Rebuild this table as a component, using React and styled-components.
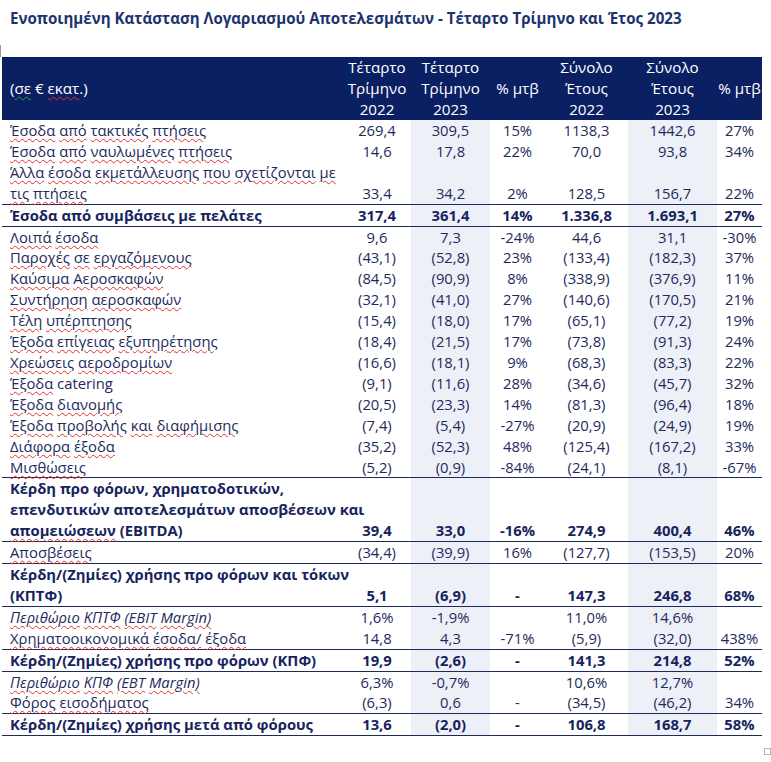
import React from "react";
import styled, { createGlobalStyle } from "styled-components";

const NAVY = "#0b1f63";
const INK = "#1d2a5c";
const SHADE = "#edf0f7";

const GlobalStyle = createGlobalStyle`
  html, body {
    margin: 0;
    padding: 0;
    background: #ffffff;
  }
  body {
    font-family: "Open Sans", "Noto Sans", sans-serif;
    color: ${INK};
  }
`;

// widths of the seven columns, left to right
const COLS = [341, 68, 79, 55, 83, 89, 45];
const SHADED = [false, false, true, false, false, true, false];

const rows = [
  { label: ["Έσοδα από τακτικές πτήσεις"], v: ["269,4", "309,5", "15%", "1138,3", "1442,6", "27%"] },
  { label: ["Έσοδα από ναυλωμένες πτήσεις"], v: ["14,6", "17,8", "22%", "70,0", "93,8", "34%"] },
  {
    label: ["Άλλα έσοδα εκμετάλλευσης που σχετίζονται με", "τις πτήσεις"],
    v: ["33,4", "34,2", "2%", "128,5", "156,7", "22%"],
    line: true,
  },
  {
    label: ["Έσοδα από συμβάσεις με πελάτες"],
    v: ["317,4", "361,4", "14%", "1.336,8", "1.693,1", "27%"],
    bold: true,
    line: true,
  },
  { label: ["Λοιπά έσοδα"], v: ["9,6", "7,3", "-24%", "44,6", "31,1", "-30%"] },
  { label: ["Παροχές σε εργαζόμενους"], v: ["(43,1)", "(52,8)", "23%", "(133,4)", "(182,3)", "37%"] },
  { label: ["Καύσιμα Αεροσκαφών"], v: ["(84,5)", "(90,9)", "8%", "(338,9)", "(376,9)", "11%"] },
  { label: ["Συντήρηση αεροσκαφών"], v: ["(32,1)", "(41,0)", "27%", "(140,6)", "(170,5)", "21%"] },
  { label: ["Τέλη υπέρπτησης"], v: ["(15,4)", "(18,0)", "17%", "(65,1)", "(77,2)", "19%"] },
  { label: ["Έξοδα επίγειας εξυπηρέτησης"], v: ["(18,4)", "(21,5)", "17%", "(73,8)", "(91,3)", "24%"] },
  { label: ["Χρεώσεις αεροδρομίων"], v: ["(16,6)", "(18,1)", "9%", "(68,3)", "(83,3)", "22%"] },
  { label: ["Έξοδα catering"], v: ["(9,1)", "(11,6)", "28%", "(34,6)", "(45,7)", "32%"] },
  { label: ["Έξοδα διανομής"], v: ["(20,5)", "(23,3)", "14%", "(81,3)", "(96,4)", "18%"] },
  { label: ["Έξοδα προβολής και διαφήμισης"], v: ["(7,4)", "(5,4)", "-27%", "(20,9)", "(24,9)", "19%"] },
  { label: ["Διάφορα έξοδα"], v: ["(35,2)", "(52,3)", "48%", "(125,4)", "(167,2)", "33%"] },
  { label: ["Μισθώσεις"], v: ["(5,2)", "(0,9)", "-84%", "(24,1)", "(8,1)", "-67%"], line: true },
  {
    label: [
      "Κέρδη προ φόρων, χρηματοδοτικών,",
      "επενδυτικών αποτελεσμάτων αποσβέσεων και",
      "απομειώσεων (EBITDA)",
    ],
    v: ["39,4", "33,0", "-16%", "274,9", "400,4", "46%"],
    bold: true,
    line: true,
  },
  { label: ["Αποσβέσεις"], v: ["(34,4)", "(39,9)", "16%", "(127,7)", "(153,5)", "20%"], line: true },
  {
    label: ["Κέρδη/(Ζημίες) χρήσης προ φόρων και τόκων", "(ΚΠΤΦ)"],
    v: ["5,1", "(6,9)", "-", "147,3", "246,8", "68%"],
    bold: true,
    line: true,
  },
  { label: ["Περιθώριο ΚΠΤΦ (EBIT Margin)"], v: ["1,6%", "-1,9%", "", "11,0%", "14,6%", ""], italic: true },
  {
    label: ["Χρηματοοικονομικά έσοδα/ έξοδα"],
    v: ["14,8", "4,3", "-71%", "(5,9)", "(32,0)", "438%"],
    line: true,
  },
  {
    label: ["Κέρδη/(Ζημίες) χρήσης προ φόρων (ΚΠΦ)"],
    v: ["19,9", "(2,6)", "-", "141,3", "214,8", "52%"],
    bold: true,
    line: true,
  },
  { label: ["Περιθώριο ΚΠΦ (EBT Margin)"], v: ["6,3%", "-0,7%", "", "10,6%", "12,7%", ""], italic: true },
  { label: ["Φόρος εισοδήματος"], v: ["(6,3)", "0,6", "-", "(34,5)", "(46,2)", "34%"], line: true },
  {
    label: ["Κέρδη/(Ζημίες) χρήσης μετά από φόρους"],
    v: ["13,6", "(2,0)", "-", "106,8", "168,7", "58%"],
    bold: true,
    line: true,
  },
];

// words the spell checker leaves alone
const CLEAN = new Set(["catering", "(EBITDA)"]);

const Squiggly = ({ text, bold }) => {
  const words = text.split(" ");
  return words.map((w, i) => {
    const marked = bold ? w === "απομειώσεων" : !CLEAN.has(w);
    return (
      <React.Fragment key={i}>
        {marked ? <Wavy>{w}</Wavy> : w}
        {i < words.length - 1 ? " " : ""}
      </React.Fragment>
    );
  });
};

const App = () => {
  return (
    <>
      <GlobalStyle />
      <Page>
        <Title>Ενοποιημένη Κατάσταση Λογαριασμού Αποτελεσμάτων - Τέταρτο Τρίμηνο και Έτος 2023</Title>
        <Sheet>
          <Handle />
          <Table>
            <colgroup>
              {COLS.map((w, i) => (
                <col key={i} style={{ width: w }} />
              ))}
            </colgroup>
            <thead>
              <tr>
                <HeadLabel>
                  (<Wavy $color="#2e9a3a">σε</Wavy> € <Wavy>εκατ</Wavy>.)
                </HeadLabel>
                <Th>
                  Τέταρτο
                  <br />
                  Τρίμηνο
                  <br />
                  2022
                </Th>
                <Th>
                  Τέταρτο
                  <br />
                  Τρίμηνο
                  <br />
                  2023
                </Th>
                <Th>% μτβ</Th>
                <Th>
                  Σύνολο
                  <br />
                  Έτους
                  <br />
                  2022
                </Th>
                <Th>
                  Σύνολο
                  <br />
                  Έτους
                  <br />
                  2023
                </Th>
                <Th>% μτβ</Th>
              </tr>
            </thead>
            <tbody>
              {rows.map((r, i) => (
                <Tr key={i} $line={r.line} $bold={r.bold}>
                  <Label $italic={r.italic}>
                    {r.label.map((l, j) => (
                      <div key={j}>
                        <Squiggly text={l} bold={r.bold} />
                      </div>
                    ))}
                  </Label>
                  {r.v.map((v, j) => (
                    <Num key={j} $shade={SHADED[j + 1]}>
                      {v}
                    </Num>
                  ))}
                </Tr>
              ))}
            </tbody>
          </Table>
          <Corner />
        </Sheet>
      </Page>
    </>
  );
};

// CSS
const Page = styled.div`
  width: 771px;
  height: 762px;
  padding: 8px 0 0 2px;
  box-sizing: border-box;
  overflow: hidden;
`;

const Title = styled.h1`
  margin: 0 0 0 8px;
  font-size: 15.1px;
  line-height: 20px;
  font-weight: 700;
  color: #1d336f;
  white-space: nowrap;
`;

const Sheet = styled.div`
  position: relative;
  margin-top: 29px;
  width: 760px;
`;

const Handle = styled.span`
  position: absolute;
  left: -2px;
  top: -12px;
  width: 1px;
  height: 12px;
  background: #9a9a9a;
`;

const Corner = styled.span`
  position: absolute;
  right: -9px;
  bottom: -19px;
  width: 5px;
  height: 5px;
  border: 1px solid #b5b5b5;
  background: #ffffff;
`;

const Table = styled.table`
  border-collapse: collapse;
  table-layout: fixed;
  width: 760px;
  font-size: 14.8px;
  line-height: 20.9px;
`;

const Th = styled.th`
  background: ${NAVY};
  color: #ffffff;
  font-weight: 400;
  font-size: 15.2px;
  text-align: center;
  vertical-align: middle;
  padding: 0;
  line-height: 21px;
  white-space: nowrap;
`;

const HeadLabel = styled(Th)`
  text-align: left;
  padding-left: 8px;
`;

const Tr = styled.tr`
  border-bottom: ${(p) => (p.$line ? `1px solid ${INK}` : "none")};
  font-weight: ${(p) => (p.$bold ? 700 : 400)};
  color: ${(p) => (p.$bold ? "#16245e" : INK)};
`;

const Label = styled.td`
  padding: 0 0 0 8px;
  white-space: nowrap;
  font-style: ${(p) => (p.$italic ? "italic" : "normal")};
  vertical-align: bottom;
`;

const Num = styled.td`
  padding: 0;
  text-align: center;
  vertical-align: bottom;
  white-space: nowrap;
  background: ${(p) => (p.$shade ? SHADE : "transparent")};
`;

const Wavy = styled.span`
  text-decoration-line: underline;
  text-decoration-style: wavy;
  text-decoration-color: ${(p) => p.$color || "#e0302c"};
  text-decoration-thickness: 1px;
  text-underline-offset: 2px;
`;

export default App;
